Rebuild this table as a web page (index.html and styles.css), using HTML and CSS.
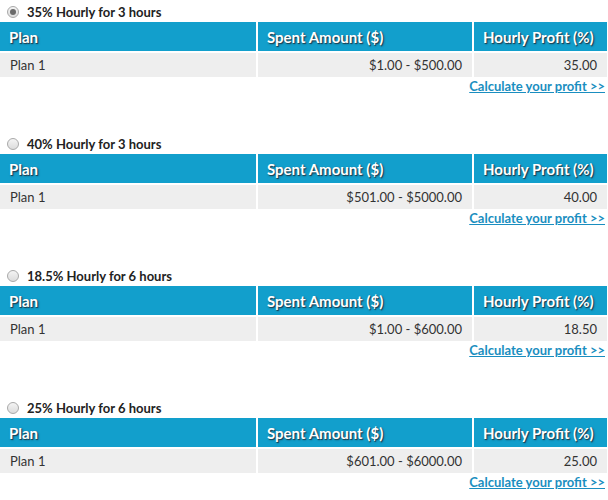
FILE: index.html
```html
<!DOCTYPE html>
<html>
<head>
<meta charset="utf-8">
<link rel="stylesheet" href="styles.css">
</head>
<body>
<div class="plans">
  <section class="plan">
    <label class="title"><span class="radio checked"></span>35% Hourly for 3 hours</label>
    <div class="grid">
      <div class="th">Plan</div><div class="th">Spent Amount ($)</div><div class="th">Hourly Profit (%)</div>
      <div class="td">Plan 1</div><div class="td num">$1.00 - $500.00</div><div class="td num">35.00</div>
    </div>
    <div class="calc"><a href="#">Calculate your profit &gt;&gt;</a></div>
  </section>
  <section class="plan">
    <label class="title"><span class="radio"></span>40% Hourly for 3 hours</label>
    <div class="grid">
      <div class="th">Plan</div><div class="th">Spent Amount ($)</div><div class="th">Hourly Profit (%)</div>
      <div class="td">Plan 1</div><div class="td num">$501.00 - $5000.00</div><div class="td num">40.00</div>
    </div>
    <div class="calc"><a href="#">Calculate your profit &gt;&gt;</a></div>
  </section>
  <section class="plan">
    <label class="title"><span class="radio"></span>18.5% Hourly for 6 hours</label>
    <div class="grid">
      <div class="th">Plan</div><div class="th">Spent Amount ($)</div><div class="th">Hourly Profit (%)</div>
      <div class="td">Plan 1</div><div class="td num">$1.00 - $600.00</div><div class="td num">18.50</div>
    </div>
    <div class="calc"><a href="#">Calculate your profit &gt;&gt;</a></div>
  </section>
  <section class="plan last">
    <label class="title"><span class="radio"></span>25% Hourly for 6 hours</label>
    <div class="grid">
      <div class="th">Plan</div><div class="th">Spent Amount ($)</div><div class="th">Hourly Profit (%)</div>
      <div class="td">Plan 1</div><div class="td num">$601.00 - $6000.00</div><div class="td num">25.00</div>
    </div>
    <div class="calc"><a href="#">Calculate your profit &gt;&gt;</a></div>
  </section>
</div>
</body>
</html>
```

FILE: styles.css
```css
html, body {
  margin: 0;
  padding: 0;
  background: #fff;
}
body {
  font-family: "Lato", "Liberation Sans", sans-serif;
  color: #333;
  font-size: 13px;
}
.plans {
  width: 607px;
}
.plan {
  height: 132px;
  padding-top: 4px;
  box-sizing: border-box;
}
.plan.last {
  height: auto;
}
.title {
  display: flex;
  align-items: center;
  height: 16px;
  font-weight: bold;
  font-size: 13px;
  color: #222;
  padding-left: 7px;
  gap: 8px;
}
.radio {
  width: 10px;
  height: 10px;
  border-radius: 50%;
  border: 1px solid #a9a9a9;
  background: linear-gradient(#f4f4f4, #dcdcdc);
  box-sizing: content-box;
  display: inline-block;
  position: relative;
}
.radio.checked::after {
  content: "";
  position: absolute;
  left: 2px;
  top: 2px;
  width: 6px;
  height: 6px;
  border-radius: 50%;
  background: #6a6a6a;
}
.grid {
  margin-top: 2px;
  display: grid;
  grid-template-columns: 256px 214px 133px;
  column-gap: 2px;
  row-gap: 2px;
}
.th {
  background: #129fcc;
  color: #fff;
  font-weight: bold;
  font-size: 15px;
  height: 29px;
  line-height: 30px;
  padding: 0 9px;
  text-shadow: 1px 1px 0 #1a4a5e, 1px 1px 2px #1a4a5e;
}
.td {
  background: #eeeeee;
  height: 24px;
  line-height: 24px;
  padding: 0 10px;
  font-size: 13px;
  color: #333;
}
.num {
  text-align: right;
}
.calc {
  text-align: right;
  padding-right: 2px;
  margin-top: 1px;
}
.calc a {
  color: #1a8ec0;
  font-weight: bold;
  font-size: 13px;
  text-decoration: underline;
}
```
